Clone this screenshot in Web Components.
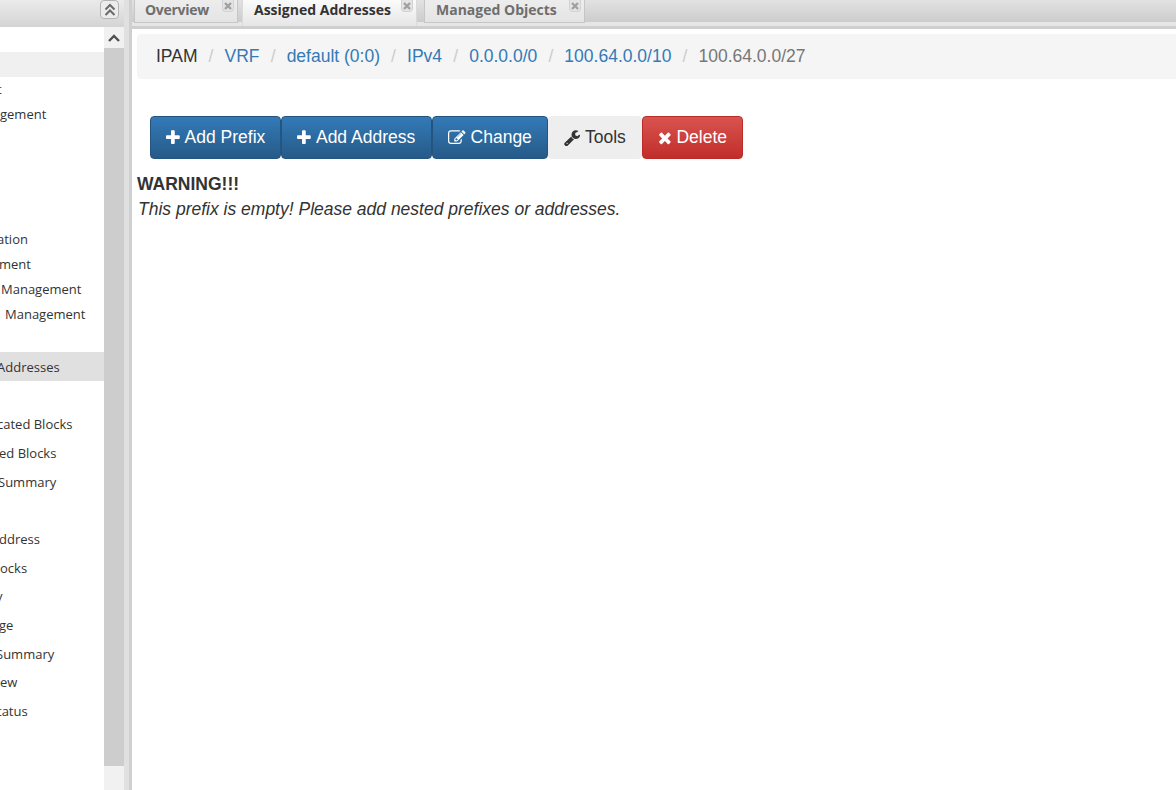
<!DOCTYPE html>
<html>
<head>
<meta charset="utf-8">
<title>IPAM</title>
<style>
    html, body { margin: 0; padding: 0; height: 100%; overflow: hidden; background: #fff; }
    body { font-family: "Liberation Sans", Arial, sans-serif; }
</style>
</head>
<body>
<app-shell>
    <side-panel slot="side">
        <tree-row kind="blank"></tree-row>
        <tree-row kind="group"></tree-row>
        <tree-row x="-3">t</tree-row>
        <tree-row>gement</tree-row>
        <tree-row kind="blank"></tree-row>
        <tree-row kind="blank"></tree-row>
        <tree-row kind="blank"></tree-row>
        <tree-row kind="blank"></tree-row>
        <tree-row x="-3">ation</tree-row>
        <tree-row x="-1">ment</tree-row>
        <tree-row x="1">Management</tree-row>
        <tree-row x="5">Management</tree-row>
        <tree-row kind="blank"></tree-row>
        <tree-row kind="selected" x="-3">Addresses</tree-row>
        <tree-row kind="tall"></tree-row>
        <tree-row kind="tall" x="-3">cated Blocks</tree-row>
        <tree-row kind="tall" x="-1">ed Blocks</tree-row>
        <tree-row kind="tall" x="-2">Summary</tree-row>
        <tree-row kind="tall"></tree-row>
        <tree-row kind="tall" x="-1">ddress</tree-row>
        <tree-row kind="tall">ocks</tree-row>
        <tree-row kind="tall" x="-4">y</tree-row>
        <tree-row kind="tall" x="-1">ge</tree-row>
        <tree-row kind="tall" x="-4">Summary</tree-row>
        <tree-row kind="tall">ew</tree-row>
        <tree-row kind="tall" x="-3">tatus</tree-row>
    </side-panel>
    <tab-bar slot="tabs">
        <tab-item style="width:104px;letter-spacing:-0.300px">Overview</tab-item>
        <tab-item active style="width:175px;margin-left:4px">Assigned Addresses</tab-item>
        <tab-item style="width:161px;margin-left:7px;padding-left:11px;letter-spacing:0">Managed Objects</tab-item>
    </tab-bar>
    <bread-crumbs>
        <span>IPAM</span>
        <a>VRF</a>
        <a>default (0:0)</a>
        <a>IPv4</a>
        <a>0.0.0.0/0</a>
        <a>100.64.0.0/10</a>
        <em>100.64.0.0/27</em>
    </bread-crumbs>
    <tool-bar>
        <tool-button kind="primary" icon="plus">Add Prefix</tool-button>
        <tool-button kind="primary" icon="plus" style="padding-right:16px">Add Address</tool-button>
        <tool-button kind="primary" icon="edit">Change</tool-button>
        <tool-button kind="default" icon="wrench">Tools</tool-button>
        <tool-button kind="danger" icon="times">Delete</tool-button>
    </tool-bar>
    <warning-note>This prefix is empty! Please add nested prefixes or addresses.</warning-note>
</app-shell>

<script>
// advance = glyph width in the 1792 em, the svg viewBox is cropped to it
const ICONS = {
    plus: {
        advance: 1408,
        d: "M1600 736v192q0 40-28 68t-68 28h-416v416q0 40-28 68t-68 28h-192q-40 0-68-28t-28-68v-416h-416q-40 0-68-28t-28-68v-192q0-40 28-68t68-28h416v-416q0-40 28-68t68-28h192q40 0 68 28t28 68v416h416q40 0 68 28t28 68z"
    },
    times: {
        advance: 1408,
        d: "M1490 1322q0 40-28 68l-136 136q-28 28-68 28t-68-28l-294-294-294 294q-28 28-68 28t-68-28l-136-136q-28-28-28-68t28-68l294-294-294-294q-28-28-28-68t28-68l136-136q28-28 68-28t68 28l294 294 294-294q28-28 68-28t68 28l136 136q28 28 28 68t-28 68l-294 294 294 294q28 28 28 68z"
    },
    wrench: {
        advance: 1664,
        d: "M448 1472q0-26-19-45t-45-19-45 19-19 45 19 45 45 19 45-19 19-45zm644-420l-682 682q-37 37-90 37-52 0-91-37l-106-108q-38-36-38-90 0-53 38-91l681-681q39 98 114.5 173.5t173.5 114.5zm634-435q0 39-23 106-47 134-164.5 217.5t-258.5 83.5q-185 0-316.5-131.5t-131.5-316.5 131.5-316.5 316.5-131.5q58 0 121.5 16.5t107.5 46.5q16 11 16 28t-16 28l-293 169v224l193 107q5-3 79-48.5t135.5-81 70.5-35.5q15 0 23.5 10t8.5 25z"
    },
    edit: {
        advance: 1792,
        d: "M888 1184l116-116-152-152-116 116v56h96v96h56zm440-720q-16-16-33 1l-350 350q-17 17-1 33t33-1l350-350q17-17 1-33zm80 594v190q0 119-84.5 203.5t-203.5 84.5h-832q-119 0-203.5-84.5t-84.5-203.5v-832q0-119 84.5-203.5t203.5-84.5h832q63 0 117 25 15 7 18 23 3 17-9 29l-49 49q-14 14-32 8-23-6-45-6h-832q-66 0-113 47t-47 113v832q0 66 47 113t113 47h832q66 0 113-47t47-113v-126q0-13 9-22l64-64q15-15 35-6t20 29zm-96-738l288 288-672 672h-288v-288zm444 132l-92 92-288-288 92-92q28-28 68-28t68 28l152 152q28 28 28 68t-28 68z"
    }
}

class AppShell extends HTMLElement {
    constructor() {
        super()
        this.attachShadow({ mode: "open" })
        this.shadowRoot.innerHTML = `
        <style>
            * { box-sizing: border-box; }
            :host {
                display: grid;
                grid-template-columns: 124px 8px 1fr;
                height: 790px;
                width: 1176px;
                overflow: hidden;
                color: #333;
            }
            .west { display: grid; grid-template-rows: 27px 1fr; min-height: 0; overflow: hidden; }
            .west-head {
                background: linear-gradient(#ebebeb, #d4d4d4);
                display: flex;
                justify-content: flex-end;
                padding: 0 5px 0 0;
            }
            .collapse {
                width: 19px;
                height: 19px;
                border: 1px solid #b4b4b4;
                border-radius: 4px;
                background: #ececec;
                display: grid;
                place-items: center;
            }
            .split { background: #e0e0e0; border-right: 3px solid #d0d0d0; }
            .center { display: grid; grid-template-rows: 22px 4px 3px 1fr; min-width: 0; overflow: hidden; }
            .light { background: #e6e6e6; }
            .strip { background: #cfcfcf; }
            .body { padding: 5px 0 0 5px; min-width: 0; background: #fff; }
        </style>
        <div class="west">
            <div class="west-head">
                <div class="collapse">
                    <svg width="12" height="14" viewBox="0 0 12 14" fill="none" stroke="#6a6a6a" stroke-width="2">
                        <path d="M1.5 6.5 6 2l4.500 4.500M1.500 12 6 7.500l4.500 4.500"/>
                    </svg>
                </div>
            </div>
            <slot name="side"></slot>
        </div>
        <div class="split"></div>
        <div class="center">
            <slot name="tabs"></slot>
            <div class="light"></div>
            <div class="strip"></div>
            <div class="body"><slot></slot></div>
        </div>
        `
    }
}

class SidePanel extends HTMLElement {
    constructor() {
        super()
        this.attachShadow({ mode: "open" })
        this.shadowRoot.innerHTML = `
        <style>
            * { box-sizing: border-box; }
            :host { display: grid; grid-template-columns: 104px 20px; min-height: 0; overflow: hidden; }
            .list { overflow: hidden; background: #fff; }
            .bar { display: grid; grid-template-rows: 21px 1fr 24px; background: #cdcdcd; }
            .up { background: #f1f1f1; display: grid; place-items: center; }
            .down { background: #f1f1f1; }
        </style>
        <div class="list"><slot></slot></div>
        <div class="bar">
            <div class="up">
                <svg width="12" height="8" viewBox="0 0 12 8" fill="none" stroke="#505050" stroke-width="2.400">
                    <path d="M1 7 6 2l5 5"/>
                </svg>
            </div>
            <div></div>
            <div class="down"></div>
        </div>
        `
    }
}

class TreeRow extends HTMLElement {
    constructor() {
        super()
        this.attachShadow({ mode: "open" })
        this.shadowRoot.innerHTML = `
        <style>
            :host {
                display: flex;
                align-items: center;
                box-sizing: border-box;
                height: 25px;
                padding-bottom: 1px;
                font: 13px "Open Sans", "Noto Sans", sans-serif;
                color: #333;
                white-space: nowrap;
                overflow: hidden;
            }
            :host([kind="group"]) { background: #f0f0f0; }
            :host([kind="selected"]) { background: #e0e0e0; height: 29px; padding-bottom: 0; }
            :host([kind="tall"]) { height: 28.670px; padding-bottom: 0; padding-top: 1px; }
            span { display: block; }
        </style>
        <span><slot></slot></span>
        `
    }

    connectedCallback() {
        // the list is scrolled sideways, negative x cuts the row text at the pane edge
        this.shadowRoot.querySelector("span").style.marginLeft = (this.getAttribute("x") || 0) + "px"
    }
}

class TabBar extends HTMLElement {
    constructor() {
        super()
        this.attachShadow({ mode: "open" })
        this.shadowRoot.innerHTML = `
        <style>
            :host {
                display: flex;
                padding-left: 2px;
                background: linear-gradient(#e2e2e2, #cccccc);
            }
        </style>
        <slot></slot>
        `
    }
}

class TabItem extends HTMLElement {
    constructor() {
        super()
        this.attachShadow({ mode: "open" })
        this.shadowRoot.innerHTML = `
        <style>
            * { box-sizing: border-box; }
            :host {
                display: block;
                position: relative;
                box-sizing: border-box;
                height: 23px;
                padding: 1px 0 0 10px;
                font: bold 14px/17px "Open Sans", sans-serif;
                color: #6e6e6e;
                background: linear-gradient(#ededed, #e4e4e4);
                border: 1px solid #c6c6c6;
                border-top: 0;
                white-space: nowrap;
            }
            :host([active]) {
                height: 26px;
                padding-left: 11px;
                color: #333;
                background: linear-gradient(#fbfbfb, #e6e6e6);
                border-color: #dadada;
                border-bottom: 0;
            }
            .close {
                position: absolute;
                top: 0;
                right: 3px;
                width: 12px;
                height: 12px;
                border-radius: 0 0 4px 4px;
                background: #e4e4e4;
                border: 1px solid #d2d2d2;
                border-top: 0;
                display: grid;
                place-items: center;
            }
        </style>
        <slot></slot>
        <div class="close">
            <svg width="8" height="8" viewBox="0 0 8 8" stroke="#a0a0a0" stroke-width="2.400">
                <path d="M1 1l6 6M7 1 1 7"/>
            </svg>
        </div>
        `
    }
}

class BreadCrumbs extends HTMLElement {
    constructor() {
        super()
        this.attachShadow({ mode: "open" })
        this.shadowRoot.innerHTML = `
        <style>
            :host {
                display: flex;
                align-items: center;
                height: 45px;
                padding-left: 19px;
                margin-bottom: 37px;
                background: #f5f5f5;
                border-radius: 4px 0 0 4px;
                font-size: 17.500px;
                color: #333;
                white-space: nowrap;
            }
            ::slotted(a) { color: #337ab7; }
            ::slotted(em) { color: #777; font-style: normal; }
            ::slotted(*:not(:last-child))::after {
                content: "/";
                color: #ccc;
                padding: 0 11.100px;
            }
        </style>
        <slot></slot>
        `
    }
}

class ToolBar extends HTMLElement {
    constructor() {
        super()
        this.attachShadow({ mode: "open" })
        this.shadowRoot.innerHTML = `
        <style>
            :host { display: flex; padding-left: 13px; margin-bottom: 13px; }
        </style>
        <slot></slot>
        `
    }
}

class ToolButton extends HTMLElement {
    constructor() {
        super()
        this.attachShadow({ mode: "open" })
        const icon = ICONS[this.getAttribute("icon")]
        const left = (1792 - icon.advance) / 2
        this.shadowRoot.innerHTML = `
        <style>
            :host {
                display: flex;
                align-items: center;
                gap: 4.860px;
                box-sizing: border-box;
                height: 43px;
                padding: 0 15px;
                border: 1px solid transparent;
                border-radius: 4px;
                font-size: 17.500px;
                white-space: nowrap;
            }
            :host([kind="primary"]) {
                color: #fff;
                background: linear-gradient(#337ab7, #265a88);
                border-color: #245580;
            }
            :host([kind="default"]) { color: #333; background: #eee; }
            :host([kind="danger"]) {
                color: #fff;
                background: linear-gradient(#d9534f, #c12e2a);
                border-color: #b92c28;
            }
            svg { height: 17.500px; fill: currentColor; flex: none; }
        </style>
        <svg viewBox="${left} 0 ${icon.advance} 1792" style="width:${icon.advance / 1792 * 17.5}px"><path d="${icon.d}"/></svg>
        <slot></slot>
        `
    }
}

class WarningNote extends HTMLElement {
    constructor() {
        super()
        this.attachShadow({ mode: "open" })
        this.shadowRoot.innerHTML = `
        <style>
            :host { display: block; font-size: 17.500px; line-height: 25px; color: #333; }
            b { display: block; }
            i { display: block; padding-left: 1px; }
        </style>
        <b>WARNING!!!</b>
        <i><slot></slot></i>
        `
    }
}

customElements.define("app-shell", AppShell)
customElements.define("side-panel", SidePanel)
customElements.define("tree-row", TreeRow)
customElements.define("tab-bar", TabBar)
customElements.define("tab-item", TabItem)
customElements.define("bread-crumbs", BreadCrumbs)
customElements.define("tool-bar", ToolBar)
customElements.define("tool-button", ToolButton)
customElements.define("warning-note", WarningNote)
</script>
</body>
</html>
